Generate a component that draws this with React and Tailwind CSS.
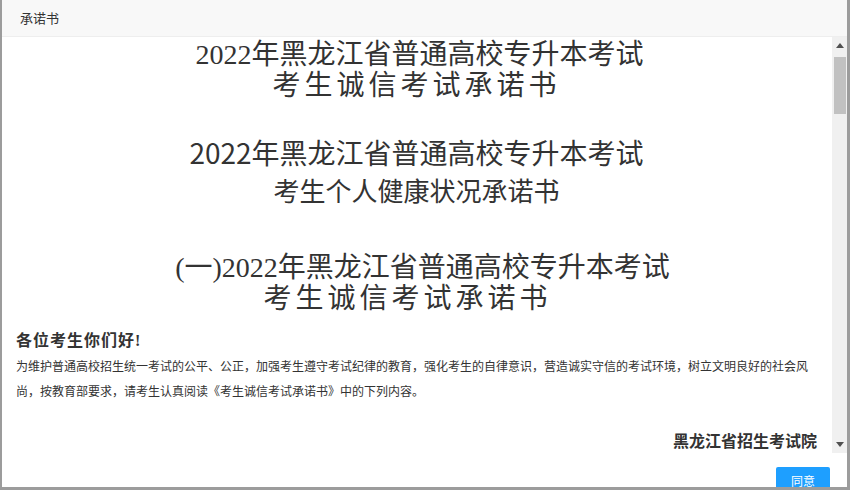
import React from 'react';

const serif = { fontFamily: '"Liberation Serif", "Noto Sans CJK SC", serif' };

function Scrollbar() {
  return (
    <div className="w-[15px] shrink-0 bg-[#f0f0f0] flex flex-col items-center">
      <div className="h-[17px] w-full flex items-center justify-center">
        <svg width="8" height="5" viewBox="0 0 8 5">
          <path d="M0 5 L4 0 L8 5 Z" fill="#505050" />
        </svg>
      </div>
      <div className="w-[12px] h-[57px] mt-[3px] bg-[#c1c1c1]" />
      <div className="flex-1" />
      <div className="h-[17px] w-full flex items-center justify-center">
        <svg width="8" height="5" viewBox="0 0 8 5">
          <path d="M0 0 L8 0 L4 5 Z" fill="#505050" />
        </svg>
      </div>
    </div>
  );
}

export default function App() {
  return (
    <div
      className="w-[850px] h-[490px] flex flex-col overflow-hidden bg-white border-l-2 border-r-[3px] border-b-[3px] border-[#9c9c9c] text-[#333]"
      style={{ fontFamily: '"Noto Sans CJK SC", "Liberation Sans", sans-serif' }}
    >
      {/* Title bar */}
      <div className="h-[37px] shrink-0 bg-[#f8f8f8] border-b border-[#eeeeee] flex items-center pl-[18px] text-[13px] text-[#333]">
        承诺书
      </div>

      {/* Body */}
      <div className="h-[416px] shrink-0 flex">
        <div className="flex-1 overflow-hidden pl-[14px] pr-[15px]">
          <div className="mt-[2px] pl-[6px] text-center text-[28px] leading-[31px]" style={serif}>
            2022年黑龙江省普通高校专升本考试
          </div>
          <div className="text-center text-[28px] leading-[31px] tracking-[4px]" style={serif}>
            考生诚信考试承诺书
          </div>

          <div className="mt-[32px] text-center text-[28px] leading-[38px]">
            2022年黑龙江省普通高校专升本考试
          </div>
          <div className="text-center text-[26px] leading-[38px]">
            考生个人健康状况承诺书
          </div>

          <div className="mt-[43px] pl-[12px] text-center text-[28px] leading-[31px]" style={serif}>
            (一)2022年黑龙江省普通高校专升本考试
          </div>
          <div className="pr-[18px] text-center text-[28px] leading-[31px] tracking-[4px]" style={serif}>
            考生诚信考试承诺书
          </div>

          <div className="mt-[15px] text-[16px] leading-[24px] font-bold tracking-[1px]" style={serif}>
            各位考生你们好!
          </div>
          <p className="text-[12px] leading-[25px] text-[#333]">
            为维护普通高校招生统一考试的公平、公正，加强考生遵守考试纪律的教育，强化考生的自律意识，营造诚实守信的考试环境，树立文明良好的社会风
            <br />
            尚，按教育部要求，请考生认真阅读《考生诚信考试承诺书》中的下列内容。
          </p>

          <div className="mt-[27px] text-right text-[16px] leading-[24px] font-bold" style={serif}>
            黑龙江省招生考试院
          </div>
        </div>
        <Scrollbar />
      </div>

      {/* Footer */}
      <div className="flex-1 flex justify-end pr-[17px]">
        <button className="mt-[14px] h-[28px] px-[15px] bg-[#1e9fff] text-white text-[12px] leading-[28px] rounded-[2px]">
          同意
        </button>
      </div>
    </div>
  );
}
